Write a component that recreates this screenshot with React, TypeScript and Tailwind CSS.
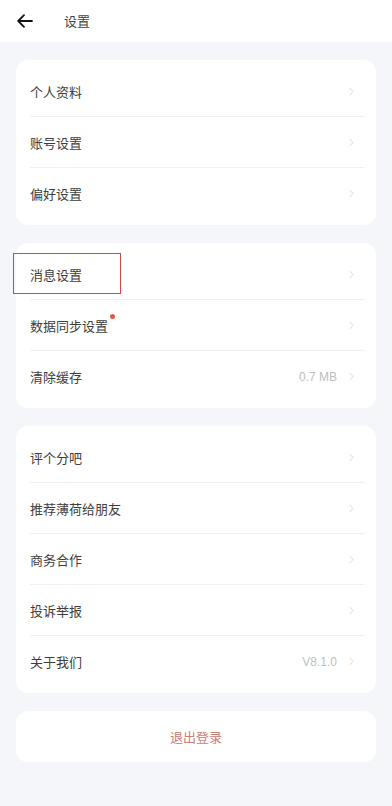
import { ChevronRight } from "lucide-react";

type Row = { label: string; value?: string; dot?: boolean };

const groups: Row[][] = [
  [{ label: "个人资料" }, { label: "账号设置" }, { label: "偏好设置" }],
  [{ label: "消息设置" }, { label: "数据同步设置", dot: true }, { label: "清除缓存", value: "0.7 MB" }],
  [
    { label: "评个分吧" },
    { label: "推荐薄荷给朋友" },
    { label: "商务合作" },
    { label: "投诉举报" },
    { label: "关于我们", value: "V8.1.0" },
  ],
];

function SettingRow({ row, last }: { row: Row; last: boolean }) {
  return (
    <div className="mx-[14px] h-[51px] flex items-center justify-between relative">
      <div className="flex items-start">
        <span className="text-[13px] text-[#3d3d3d]">{row.label}</span>
        {row.dot && <span className="ml-[2px] -mt-[2px] w-[5px] h-[5px] rounded-full bg-[#e2564b]" />}
      </div>
      <div className="flex items-center gap-[8px] pr-[4px]">
        {row.value && (
          <span className="text-[12px] text-[#bdbdbd] font-['Liberation_Sans',sans-serif]">{row.value}</span>
        )}
        <ChevronRight size={13} strokeWidth={1.5} className="text-[#cfcfcf]" />
      </div>
      {!last && <div className="absolute left-0 right-[-3px] bottom-0 h-px bg-[#f0f0f2]" />}
    </div>
  );
}

export default function App() {
  return (
    <div className="min-h-screen bg-[#f5f6fa] relative font-['Noto_Sans_CJK_SC','Noto_Sans',sans-serif]">
      {/* Header */}
      <div className="h-[42px] bg-white flex items-center">
        <svg
          width="16"
          height="14"
          viewBox="0 0 16 14"
          className="ml-[17px]"
          fill="none"
          stroke="#111"
          strokeWidth="1.8"
          strokeLinecap="round"
          strokeLinejoin="round"
        >
          <path d="M15 7H1.5M7 1.2L1.2 7L7 12.8" />
        </svg>
        <span className="ml-[31px] text-[13px] text-[#444]">设置</span>
      </div>

      <div className="px-4 pt-[18px] flex flex-col gap-[18px]">
        {groups.map((g, i) => (
          <div key={i} className="bg-white rounded-xl py-[6px]">
            {g.map((r, j) => (
              <SettingRow key={r.label} row={r} last={j === g.length - 1} />
            ))}
          </div>
        ))}
        <div className="bg-white rounded-xl h-[51px] flex items-center justify-center">
          <span className="text-[13px] text-[#c97b74]">退出登录</span>
        </div>
      </div>

      {/* annotation box */}
      <div className="absolute left-[13px] top-[253px] w-[108px] h-[41px] border-[1.5px] border-[#cf4a46]" />
    </div>
  );
}
